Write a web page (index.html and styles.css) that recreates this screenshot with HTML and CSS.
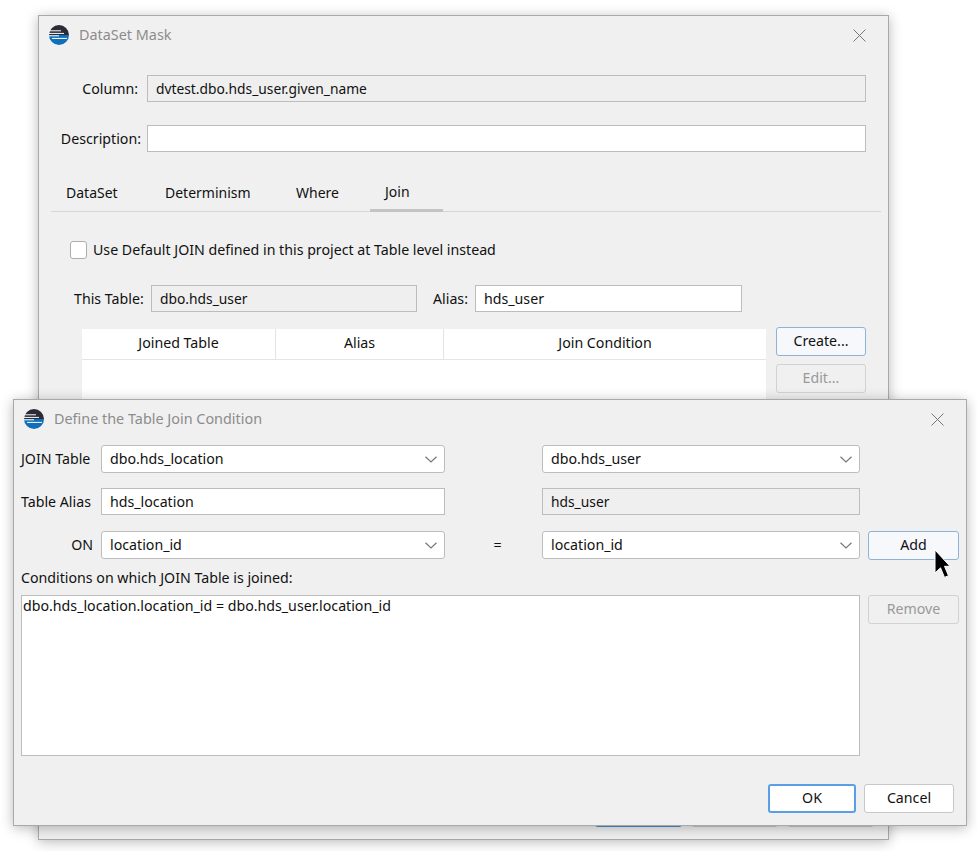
FILE: index.html
```html
<!DOCTYPE html>
<html lang="en">

<head>
  <meta charset="UTF-8">
  <title>DataSet Mask</title>
  <link rel="stylesheet" href="styles.css">
</head>

<body>
  <svg class="defs" width="0" height="0">
    <symbol id="logo" viewBox="0 0 20 20">
      <path d="M0 10a10 10 0 0 1 20 0z" fill="#2c2c36" />
      <path d="M0 10a10 10 0 0 0 20 0z" fill="#0f6fb8" />
      <path d="M0 5.8h12M0 8.4h15M0 10.8h10M3 13.4h15" stroke="#fff" stroke-width="1" />
    </symbol>
    <symbol id="close" viewBox="0 0 13 13">
      <path d="M.5.5l12 12M12.5.5l-12 12" stroke="#777" stroke-width="1" fill="none" />
    </symbol>
    <symbol id="chevron" viewBox="0 0 12 7">
      <path d="M.5 .8L6 6l5.5-5.2" stroke="#777" stroke-width="1.2" fill="none" />
    </symbol>
  </svg>

  <!-- window behind -->
  <div class="window mask-window">
    <div class="titlebar">
      <svg class="logo"><use href="#logo" /></svg>
      <span class="title">DataSet Mask</span>
      <svg class="close"><use href="#close" /></svg>
    </div>

    <div class="mask-form">
      <div class="lbl lbl-column">Column:</div>
      <div class="field readonly">dvtest.dbo.hds_user.given_name</div>
      <div class="lbl">Description:</div>
      <div class="field"></div>
    </div>

    <div class="tabs">
      <div class="tab tab-dataset">DataSet</div>
      <div class="tab tab-determinism">Determinism</div>
      <div class="tab tab-where">Where</div>
      <div class="tab active">Join</div>
    </div>

    <div class="check-row">
      <span class="checkbox"></span>
      <span>Use Default JOIN defined in this project at Table level instead</span>
    </div>

    <div class="this-table">
      <span class="this-lbl">This Table:</span>
      <div class="field readonly this-field">dbo.hds_user</div>
      <span class="alias-lbl">Alias:</span>
      <div class="field alias-field">hds_user</div>
    </div>

    <div class="join-area">
      <div class="join-table">
        <div class="join-head">
          <div class="col col-table">Joined Table</div>
          <div class="col col-alias">Alias</div>
          <div class="col col-cond">Join Condition</div>
        </div>
      </div>
      <div class="join-buttons">
        <div class="btn btn-hot">Create...</div>
        <div class="btn btn-off">Edit...</div>
      </div>
    </div>

    <div class="mask-footer">
      <div class="stub stub-ok"></div>
      <div class="stub"></div>
      <div class="stub"></div>
    </div>
  </div>

  <!-- dialog on top -->
  <div class="window join-window">
    <div class="titlebar">
      <svg class="logo"><use href="#logo" /></svg>
      <span class="title">Define the Table Join Condition</span>
      <svg class="close"><use href="#close" /></svg>
    </div>

    <div class="join-grid">
      <div class="lbl-left">JOIN Table</div>
      <div class="field select">dbo.hds_location<svg class="chevron"><use href="#chevron" /></svg></div>
      <div></div>
      <div class="field select">dbo.hds_user<svg class="chevron"><use href="#chevron" /></svg></div>
      <div></div>

      <div class="lbl-left">Table Alias</div>
      <div class="field text-field">hds_location</div>
      <div></div>
      <div class="field text-field readonly">hds_user</div>
      <div></div>

      <div class="lbl-on">ON</div>
      <div class="field select">location_id<svg class="chevron"><use href="#chevron" /></svg></div>
      <div class="equals">=</div>
      <div class="field select">location_id<svg class="chevron"><use href="#chevron" /></svg></div>
      <div class="btn btn-hot">Add</div>
    </div>

    <div class="cond-label">Conditions on which JOIN Table is joined:</div>

    <div class="cond-row">
      <div class="cond-list">dbo.hds_location.location_id = dbo.hds_user.location_id</div>
      <div class="btn btn-off">Remove</div>
    </div>

    <div class="join-footer">
      <div class="btn btn-default">OK</div>
      <div class="btn btn-plain">Cancel</div>
    </div>
  </div>

  <svg class="cursor" width="17" height="30" viewBox="0 0 17 30">
    <path d="M1 1v23l5.5-5.2 4 9.6 4-1.7-4-9.4H16z" fill="#000" stroke="#fff" stroke-width="1" />
  </svg>
</body>

</html>
```

FILE: styles.css
```css
* {
  box-sizing: border-box;
}

html,
body {
  height: 851px;
  margin: 0;
  overflow: hidden;
  background: #fff;
}

body {
  font-family: "Noto Sans", "Open Sans", sans-serif;
  font-size: 14.2px;
  line-height: 18px;
  color: #111;
}

.defs {
  position: absolute;
}

.window {
  position: absolute;
  display: flex;
  flex-direction: column;
  padding-left: 1px;
  background: #f0f0f0;
  border: 1px solid #a9a9a9;
  box-shadow: 0 2px 12px rgba(0, 0, 0, 0.28);
}

.mask-window {
  left: 38px;
  top: 15px;
  width: 851px;
  height: 825px;
}

.join-window {
  left: 13px;
  top: 399px;
  width: 954px;
  height: 427px;
}

.titlebar {
  display: flex;
  align-items: center;
  height: 38px;
  padding: 0 22px 0 9px;
  flex-shrink: 0;
}

.logo {
  width: 20px;
  height: 20px;
}

.title {
  margin-left: 10px;
  font-size: 14.4px;
  color: #8c8c8c;
}

.close {
  width: 13px;
  height: 13px;
  margin-left: auto;
}

.field {
  display: flex;
  align-items: center;
  height: 27px;
  padding: 0 8px;
  background: #fff;
  border: 1px solid #bdbdbd;
  white-space: nowrap;
}

.readonly {
  font-size: 13.8px;
  background: #efefef;
}

.select {
  justify-content: space-between;
  height: 28px;
  padding: 0 7px 1px 8px;
  border-radius: 3px;
}

.chevron {
  width: 12px;
  height: 7px;
  margin-top: 1px;
}

.btn {
  display: flex;
  align-items: center;
  justify-content: center;
  height: 29px;
  padding-bottom: 2px;
  border-radius: 3px;
}

.btn-hot {
  background: #f6f8fb;
  border: 1px solid #8fb2d8;
}

.btn-off {
  color: #999;
  border: 1px solid #d2d2d2;
}

.btn-plain {
  width: 90px;
  background: #fff;
  border: 1px solid #c8c8c8;
}

.btn-default {
  width: 88px;
  background: #fff;
  border: 2px solid #5a9fe6;
}

/* mask window */
.mask-form {
  display: grid;
  grid-template-columns: 101px 719px;
  column-gap: 6px;
  row-gap: 23px;
  align-items: center;
  margin-top: 21px;
}

.lbl {
  text-align: right;
}

.lbl-column {
  padding-right: 3px;
}

.tabs {
  display: flex;
  height: 38px;
  margin: 22px 7px 0 11px;
  font-size: 14px;
  border-bottom: 1px solid #d6d6d6;
}

.tab {
  display: flex;
  align-items: center;
  padding-left: 15px;
}

.tab-dataset {
  width: 99px;
}

.tab-determinism {
  width: 131px;
}

.tab-where {
  width: 89px;
}

.tab.active {
  width: 73px;
  height: 38px;
  border-bottom: 3px solid #c4c4c4;
}

.check-row {
  display: flex;
  align-items: center;
  gap: 6px;
  margin: 29px 0 0 30px;
}

.checkbox {
  width: 17px;
  height: 18px;
  background: #fff;
  border: 1px solid #adadad;
  border-radius: 3px;
}

.this-table {
  display: flex;
  align-items: center;
  height: 27px;
  margin: 26px 0 0 34px;
}

.this-lbl {
  width: 77px;
}

.this-field {
  width: 266px;
}

.alias-lbl {
  width: 42px;
  margin-left: 16px;
}

.alias-field {
  width: 267px;
}

.join-area {
  display: flex;
  gap: 10px;
  margin: 17px 21px 0 42px;
}

.join-table {
  width: 684px;
  height: 91px;
  background: #fff;
}

.join-head {
  display: flex;
  height: 31px;
  border-bottom: 1px solid #e4e4e4;
}

.col {
  display: flex;
  align-items: center;
  justify-content: center;
  padding-bottom: 2px;
  border-right: 1px solid #e4e4e4;
}

.col-table {
  width: 194px;
}

.col-alias {
  width: 168px;
}

.col-cond {
  flex: 1;
  border-right: 0;
}

.join-buttons {
  display: flex;
  flex-direction: column;
  gap: 8px;
  width: 90px;
  margin-top: -2px;
}

.mask-footer {
  display: flex;
  justify-content: flex-end;
  gap: 9px;
  margin-top: auto;
  padding: 0 14px 12px 0;
}

.stub {
  width: 87px;
  height: 29px;
  background: #fff;
  border: 1px solid #c8c8c8;
  border-radius: 3px;
}

.stub-ok {
  border: 2px solid #4d8fd0;
}

/* join dialog */
.join-grid {
  display: grid;
  grid-template-columns: 80px 344px 97px 318px 91px;
  grid-auto-rows: 28px;
  row-gap: 15px;
  align-items: center;
  margin: 7px 0 0 6px;
}

.text-field {
  align-self: start;
}

.lbl-on {
  padding-right: 8px;
  text-align: right;
}

.equals {
  padding-left: 8px;
  text-align: center;
}

.join-grid .btn-hot {
  margin-left: 8px;
  width: 91px;
  padding-bottom: 0;
}

.cond-label {
  margin: 10px 0 0 6px;
}

.cond-row {
  display: flex;
  align-items: flex-start;
  gap: 8px;
  margin: 8px 0 0 6px;
}

.cond-list {
  width: 839px;
  height: 161px;
  padding: 1px;
  background: #fff;
  border: 1px solid #bdbdbd;
}

.cond-row .btn-off {
  width: 91px;
}

.join-footer {
  display: flex;
  justify-content: flex-end;
  gap: 8px;
  margin-top: 28px;
  padding-right: 12px;
}

.cursor {
  position: absolute;
  left: 934px;
  top: 549px;
}
```
